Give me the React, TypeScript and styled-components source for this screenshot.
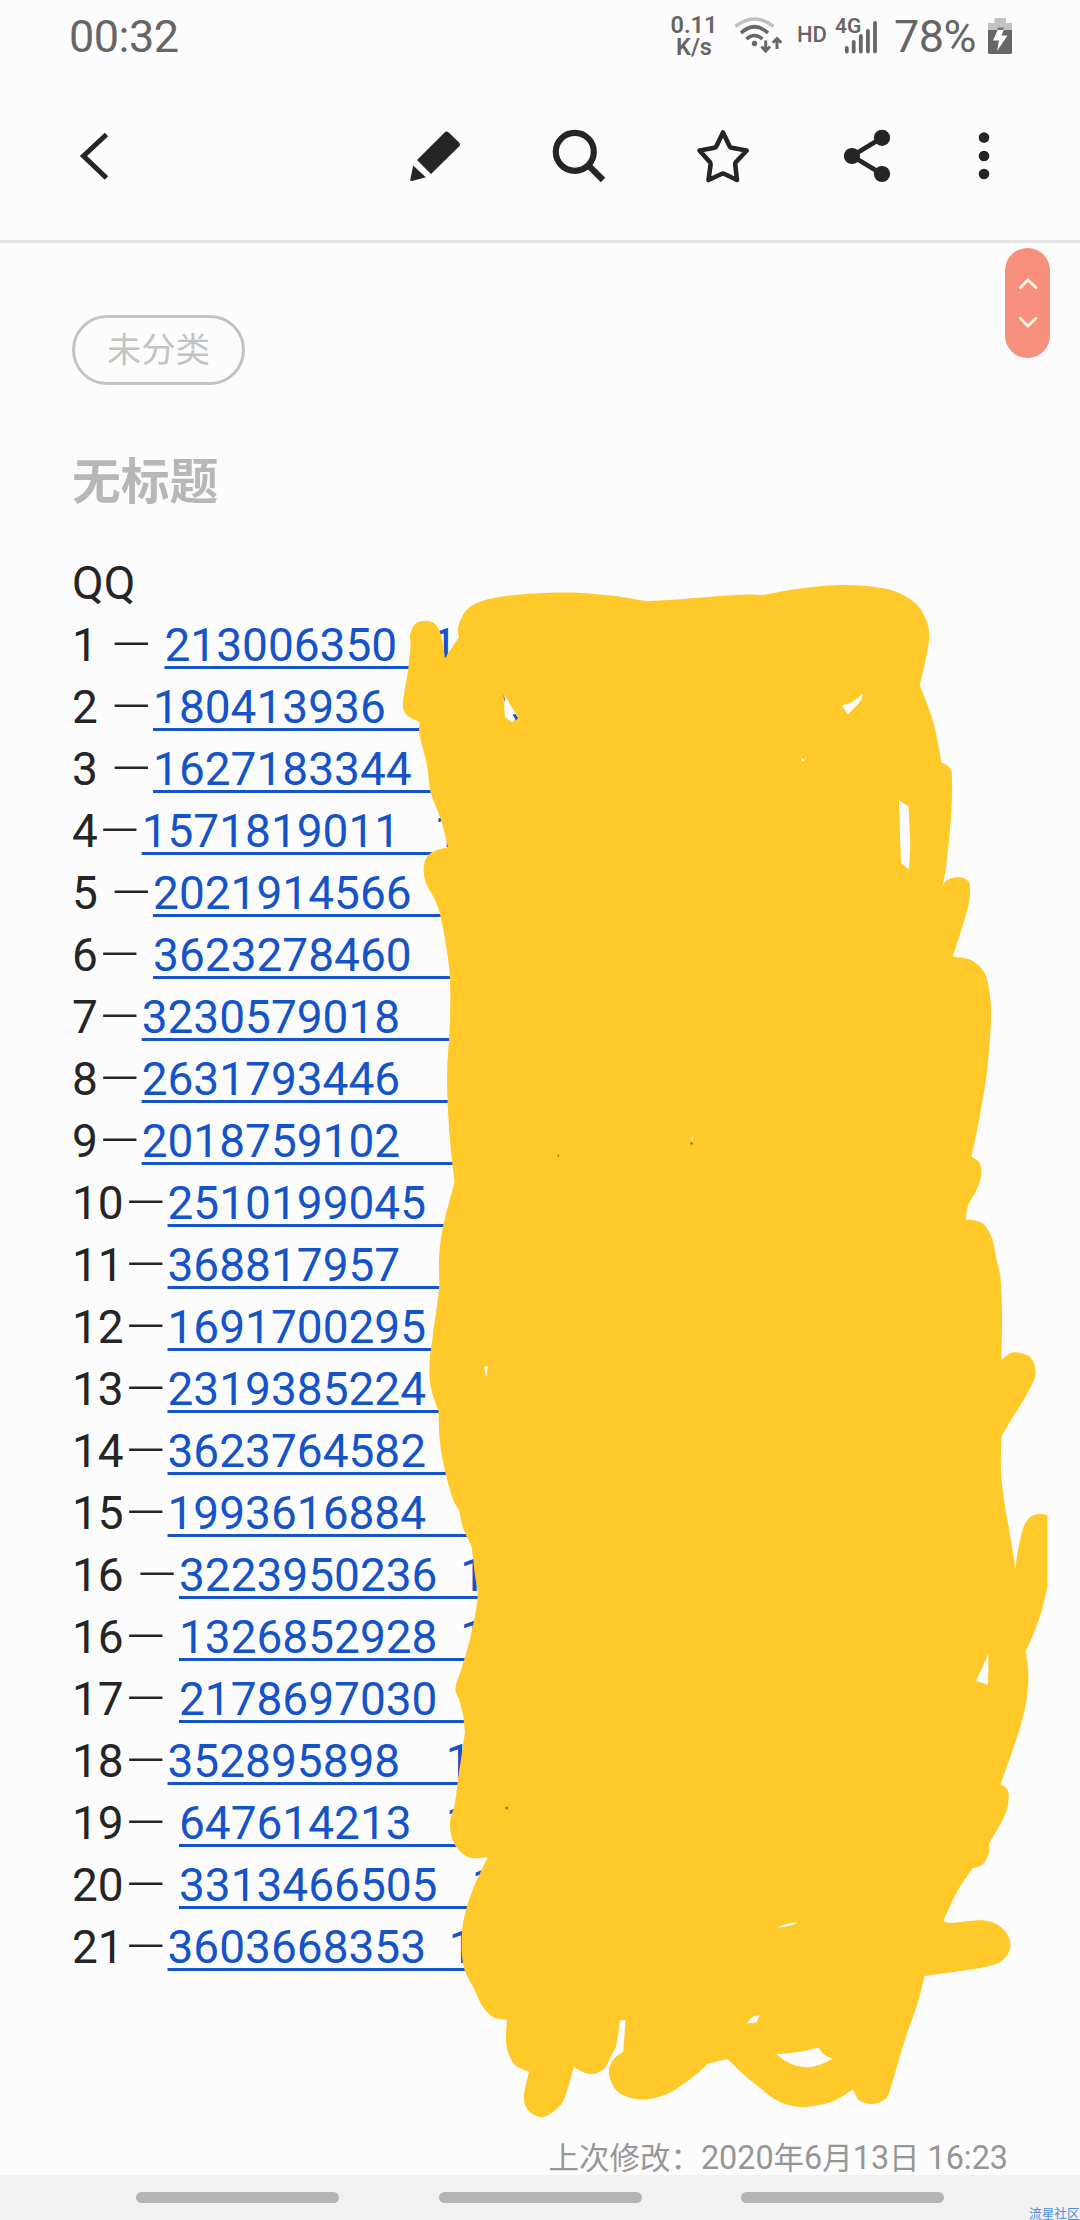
import React from "react";
import styled, { createGlobalStyle } from "styled-components";

const GlobalStyle = createGlobalStyle`
  body { margin: 0; background: #fcfcfc; }
  * { box-sizing: border-box; }
`;

const Screen = styled.div`
  position: relative;
  display: flex;
  flex-direction: column;
  width: 1080px;
  height: 2220px;
  overflow: hidden;
  background: #fcfcfc;
  color: #252525;
  font-family: Roboto, "Noto Sans CJK SC", sans-serif;
`;

const StatusBar = styled.header`
  display: flex;
  height: 72px;
  padding: 0 68px;
  align-items: center;
  color: #666;
`;

const StatusText = styled.span`
  padding-top: 2px;
  font-size: 45px;
  line-height: 70px;
  letter-spacing: -0.5px;
`;

const Clock = styled(StatusText)`
  flex: 1;
  padding-left: 1px;
`;

const Percent = styled(StatusText)`
  margin-left: 15px;
`;

const NetSpeed = styled.div`
  display: flex;
  flex-direction: column;
  width: 50px;
  align-items: center;
  font-size: 23.5px;
  line-height: 22px;
  font-weight: 600;
`;

const HdLabel = styled.span`
  margin-left: 13px;
  padding-bottom: 3px;
  font-size: 22px;
  font-weight: 500;
`;

const Signal = styled.div`
  position: relative;
  width: 44px;
  height: 72px;
  margin-left: 8px;
`;

const Generation = styled.span`
  position: absolute;
  left: 0;
  top: 13px;
  font-size: 21px;
  line-height: 26px;
  font-weight: 600;
`;

const Toolbar = styled.nav`
  display: flex;
  align-items: center;
  justify-content: space-between;
  height: 171px;
  padding: 0 66px 0 64px;
  border-bottom: 3px solid #e6e6e6;
`;

const Actions = styled.div`
  display: flex;
  gap: 84px;
`;

const MoreSlot = styled.div`
  display: flex;
  margin-left: -27px;
`;

const Note = styled.main`
  display: flex;
  flex: 1;
  flex-direction: column;
  align-items: flex-start;
  padding: 72px 72px 0 72px;
`;

const Category = styled.div`
  width: 173px;
  height: 70px;
  border: 3px solid #c3c3c3;
  border-radius: 35px;
  color: #c3c3c3;
  font-size: 34.3px;
  font-weight: 400;
  line-height: 65px;
  text-align: center;
`;

const Title = styled.h1`
  margin: 63px 0 0;
  color: #b7b7b7;
  font-size: 48.8px;
  font-weight: 700;
  line-height: 70px;
`;

const Lines = styled.div`
  margin-top: 34px;
  font-size: 46px;
  line-height: 62px;
`;

const Line = styled.div`
  display: flex;
  height: 62px;
  white-space: pre;
`;

const Dash = styled.span`
  width: 43.8px;
  display: flex;
  justify-content: center;
  font-size: 51px;
  font-weight: 300;
  line-height: 61px;
`;

const NumberLink = styled.a`
  color: #1553c9;
  text-decoration: underline;
  text-decoration-thickness: 2.5px;
  text-underline-offset: 5px;
  text-decoration-skip-ink: none;
`;

const Modified = styled.div`
  align-self: flex-end;
  margin-top: auto;
  color: #969696;
  font-size: 32.3px;
  line-height: 32px;
  white-space: nowrap;
`;

const Han = styled.span`
  font-size: 30.5px;
`;

const NavBar = styled.footer`
  display: flex;
  height: 45px;
  padding: 17px 136px 0;
  justify-content: space-between;
  background: #f1f1f1;
`;

const NavHandle = styled.div`
  width: 203px;
  height: 11px;
  border-radius: 6px;
  background: #b5b5b5;
`;

const ScrollPill = styled.div`
  position: absolute;
  left: 1005px;
  top: 248px;
  width: 45px;
  height: 110px;
  border-radius: 23px;
  background: #f68f7b;
`;

const Scribble = styled.svg`
  position: absolute;
  left: 0;
  top: 0;
  pointer-events: none;
`;

const Watermark = styled.span`
  position: absolute;
  left: 1029px;
  top: 2207px;
  color: #4a90e2;
  font-size: 12.7px;
  line-height: 13px;
  white-space: nowrap;
`;

type Entry = [before: string, after: string, link: string];

const entries: Entry[] = [
  ["1 ", " ", "213006350   1"],
  ["2 ", "", "180413936       "],
  ["3 ", "", "1627183344     "],
  ["4", "", "1571819011   1"],
  ["5 ", "", "2021914566     "],
  ["6", " ", "3623278460     "],
  ["7", "", "3230579018      "],
  ["8", "", "2631793446      "],
  ["9", "", "2018759102    1"],
  ["10", "", "2510199045    "],
  ["11", "", "368817957      "],
  ["12", "", "1691700295    "],
  ["13", "", "2319385224    "],
  ["14", "", "3623764582    "],
  ["15", "", "1993616884     "],
  ["16 ", "", "3223950236  1"],
  ["16", " ", "1326852928  1"],
  ["17", " ", "2178697030    "],
  ["18", "", "352895898    1"],
  ["19", " ", "647614213   1"],
  ["20", " ", "3313466505   1"],
  ["21", "", "3603668353  1"],
];

type Pt = [number, number];

/* Each run is a smooth stretch of the marker outline; a new run starts at a corner. */
const outline: Pt[][] = [
  [[459, 637], [458.4, 626], [470, 607], [502, 596.5], [563, 592.5], [610, 595.5], [645, 601]],
  [[670, 600], [739, 594.8], [763, 595]],
  [[800, 588.5], [841, 585], [875, 587], [898, 592.5], [919, 607], [929, 631], [926, 658], [919.6, 685]],
  [[933, 721], [941.6, 762.5]],
  [[949, 767], [952, 777], [951, 817], [946, 867], [941, 894]],
  [[945, 882], [957, 877], [968, 881], [970, 892], [967, 911], [953, 956.4]],
  [[971, 960], [984, 972], [989.5, 992], [991, 1021], [987, 1071], [979.6, 1117], [971.5, 1157]],
  [[979, 1162], [981.5, 1174], [977, 1189], [968, 1206], [966, 1219.6]],
  [[982, 1223], [992, 1238], [996, 1257], [1000.6, 1279], [1002, 1314], [1001.5, 1360]],
  [[1009, 1354], [1018, 1352.5], [1031, 1358], [1035.5, 1373], [1028, 1392], [1001.5, 1436]],
  [[1001, 1471], [1004, 1500], [1009, 1529], [1015.5, 1568]],
  [[1018, 1550], [1024, 1526], [1032, 1516], [1042, 1514], [1047.5, 1515.5]],
  [[1047.5, 1586]],
  [[1041, 1613], [1033, 1635], [1025.8, 1651]],
  [[1028.4, 1681], [1022, 1721], [1000.6, 1784]],
  [[1008, 1791], [1008, 1805], [1003, 1819], [989, 1843.5]],
  [[989, 1853], [983, 1864], [972.4, 1868.6]],
  [[957, 1892], [943.8, 1920]],
  [[950, 1923], [985, 1920.5], [1003, 1929], [1010.5, 1944], [1004, 1959], [985, 1967], [924.7, 1976]],
  [[917, 2005], [905, 2039.6], [890, 2090], [884, 2100], [871.8, 2104], [859, 2100], [853, 2089.5]],
  [[831, 2102], [801, 2107], [778, 2101], [760, 2088], [743, 2074], [727.4, 2059]],
  [[708, 2063.6]],
  [[693, 2077], [667, 2094], [640.7, 2099.5], [618, 2092], [609, 2074], [613, 2060], [623.3, 2051.4]],
  [[625.5, 2020.3]],
  [[620, 2020.3]],
  [[618, 2036], [616, 2047]],
  [[611, 2056], [604, 2069], [589.5, 2074], [573.5, 2067]],
  [[568, 2088], [560.5, 2105], [543, 2117], [528, 2110], [524, 2096], [529, 2071.7]],
  [[515, 2065], [508, 2052], [506, 2039], [507, 2020]],
  [[493, 2017], [482.4, 2006], [473.7, 1988]],
  [[464, 1968], [461.6, 1943], [464, 1918], [473, 1889], [487.6, 1857.5]],
  [[468, 1857], [454, 1843], [450, 1823], [455, 1803], [458, 1780], [465, 1732.5]],
  [[463, 1715], [459, 1699]],
  [[455.5, 1688], [462, 1667], [471, 1635], [477.5, 1598], [475, 1575], [471.5, 1546]],
  [[463, 1528], [459.4, 1510.7]],
  [[453, 1499], [445.5, 1473], [440, 1443], [438.5, 1411]],
  [[431, 1388], [429.5, 1364], [433, 1334], [439, 1289], [439, 1260], [443, 1227], [454.6, 1182]],
  [[450, 1140], [447, 1078], [450, 1020], [449, 967], [438.8, 910], [426, 883], [424, 865], [430.6, 853], [448, 847]],
  [[441, 820], [430.6, 792], [427, 765], [419.6, 735], [419.6, 722]],
  [[407, 715], [403, 703], [408, 671], [410.5, 645], [410, 635], [415, 624], [425.7, 620.7], [435, 624], [441, 635], [445, 658]],
  [[447, 656]],
  [[447, 655], [459, 637]],
];

/* Catmull-Rom interpolation written out as cubic Bezier segments. */
function tracePath(runs: Pt[][]): string {
  let last: Pt = runs[0][0];
  let d = `M${last[0]} ${last[1]}`;
  runs.forEach((run, index) => {
    const points = index === 0 ? run : [last, ...run];
    for (let i = 0; i < points.length - 1; i += 1) {
      const p0 = points[Math.max(0, i - 1)];
      const p1 = points[i];
      const p2 = points[i + 1];
      const p3 = points[Math.min(points.length - 1, i + 2)];
      d += `C${p1[0] + (p2[0] - p0[0]) / 6} ${p1[1] + (p2[1] - p0[1]) / 6} ${p2[0] - (p3[0] - p1[0]) / 6} ${p2[1] - (p3[1] - p1[1]) / 6} ${p2[0]} ${p2[1]}`;
    }
    last = points[points.length - 1];
  });
  return `${d}Z`;
}

const markerPath = tracePath(outline);

const WifiSvg = styled.svg`
  margin-left: 15px;
`;

const BatterySvg = styled.svg`
  margin-left: 12px;
`;

const WifiIcon = () => (
  <WifiSvg width="50" height="40" viewBox="734 16 50 40" fill="none" stroke="#666" strokeWidth="3.6">
    <path d="M735.5 26.5Q754.5 11.500 773.500 26.500" stroke="#c0c0c0" />
    <path d="M741 33Q754.500 20.500 768 33" />
    <path d="M746.500 39Q754.500 32 762.500 39" />
    <circle cx="754.500" cy="43.500" r="2.700" fill="#666" stroke="none" />
    <path d="M765.700 40.500V51M761.500 46.500L765.700 51L770 46.500M777 49V38.500M772.800 42.700L777 38.500L781.300 42.700" strokeWidth="3" />
  </WifiSvg>
);

const SignalBars = () => (
  <svg width="44" height="72" viewBox="834 0 44 72" stroke="#666" strokeWidth="3.800" strokeLinecap="round">
    <path d="M845.800 48V51.500M852.700 42V51.500M859.800 36V51.500M866.900 31V51.500M874 23V51.500" />
  </svg>
);

const BatteryIcon = () => (
  <BatterySvg width="24" height="38" viewBox="988 16 24 38">
    <path d="M994.500 17H1006V22H1012V30H988V22H994.500Z" fill="#c2c2c2" />
    <path d="M988 29H1012V51.500Q1012 53 1010.500 53H989.500Q988 53 988 51.500Z" fill="#666" />
    <path d="M998 28H1004L1001.500 34.500H1007.500L997 50L999 39.500H993Z" fill="#fcfcfc" />
    <path d="M998 26.500H1004L1003.200 29H997.200Z" fill="#777" />
  </BatterySvg>
);

const iconProps = { width: 60, height: 60, fill: "none", stroke: "#252525" };

export default function App() {
  return (
    <>
      <GlobalStyle />
      <Screen>
        <StatusBar>
          <Clock>00:32</Clock>
          <NetSpeed>
            <span>0.11</span>
            <span>K/s</span>
          </NetSpeed>
          <WifiIcon />
          <HdLabel>HD</HdLabel>
          <Signal>
            <SignalBars />
            <Generation>4G</Generation>
          </Signal>
          <Percent>78%</Percent>
          <BatteryIcon />
        </StatusBar>

        <Toolbar>
          <svg {...iconProps} viewBox="64 126 60 60" strokeWidth="5">
            <path d="M106.500 134.500L83.500 156L106.500 178" />
          </svg>
          <Actions>
            <svg {...iconProps} viewBox="405 126 60 60" fill="#252525" stroke="none">
              <path d="M444.800 132.300Q446.600 130.500 448.500 132.300L459.300 142.700Q461 144.500 459.300 146.300L431 174L417 160Z" />
              <path d="M413.200 165.500L425.800 177.300L412 181Q410 181.500 410.300 179.500Z" />
            </svg>
            <svg {...iconProps} viewBox="549 126 60 60" strokeWidth="6.200">
              <circle cx="574.800" cy="151.800" r="19" />
              <path d="M588 165L603 180" />
            </svg>
            <svg {...iconProps} viewBox="693 126 60 60" strokeWidth="4.600" strokeLinejoin="round">
              <path d="M723 132.500L729.500 146Q730 147.500 731.500 147.700L746.700 150.500L736 162Q735 163 735.200 164.500L737 180L724.500 174Q723 173.300 721.500 174L708.500 180L710.600 164.500Q710.800 163 709.800 162L699.500 150.500L714.500 147.700Q716 147.500 716.500 146Z" />
            </svg>
            <svg {...iconProps} viewBox="837 126 60 60" strokeWidth="4.800">
              <path d="M882 137.800L852 156L882 174" />
              <g fill="#252525" stroke="none">
                <circle cx="882" cy="137.800" r="8.100" />
                <circle cx="852" cy="156" r="8.100" />
                <circle cx="882" cy="174" r="8.100" />
              </g>
            </svg>
            <MoreSlot>
              <svg {...iconProps} viewBox="954 126 60 60" fill="#252525" stroke="none">
                <circle cx="984" cy="137.500" r="5.300" />
                <circle cx="984" cy="156" r="5.300" />
                <circle cx="984" cy="174" r="5.300" />
              </svg>
            </MoreSlot>
          </Actions>
        </Toolbar>

        <Note>
          <Category>未分类</Category>
          <Title>无标题</Title>
          <Lines>
            <Line>QQ</Line>
            {entries.map(([before, after, link], index) => (
              <Line key={index}>
                {before}
                <Dash>—</Dash>
                {after && <span>{after}</span>}
                <NumberLink>{link}</NumberLink>
              </Line>
            ))}
          </Lines>
          <Modified>
            <Han>上次修改：</Han>2020<Han>年</Han>6<Han>月</Han>13<Han>日</Han> 16:23
          </Modified>
        </Note>

        <NavBar>
          <NavHandle />
          <NavHandle />
          <NavHandle />
        </NavBar>

        <ScrollPill>
          <svg width="45" height="110" viewBox="1005 248 45 110" fill="none" stroke="#fff3e6" strokeWidth="2.800">
            <path d="M1019.500 288.500L1028 280L1036.800 288.500M1019.500 317.500L1028 326L1036.800 317.500" />
          </svg>
        </ScrollPill>

        <Scribble width="1080" height="2220" viewBox="0 0 1080 2220">
          <path d={markerPath} fill="#ffc929" />
          <g fill="#fcfcfc">
            <path d="M503.500 694L518 717L512 722.500L505 717Z" />
            <path d="M841.600 705.700Q852 704 862.400 694Q863 698 859 703L847.800 714.600Z" />
            <path d="M899 800L908.600 806.400L910.300 845.700L909 869.600L901 863L899.800 831Z" />
            <path d="M801 757.500L804.500 760L802.500 762Z" />
            <path d="M988.500 1654L988 1685L976 1680.700Z" />
            <path d="M777 1927.500Q788 1922.500 797 1922.500Q796 1925.500 777 1927.500Z" />
            <path d="M759.500 2015.500L756.500 2022.500L747 2023.600Q751 2015 759.500 2015.500Z" />
            <path d="M776.400 2054Q800 2053 818.500 2047.500Q822 2055 832.400 2058.800Q802 2078 776.400 2054Z" />
            <path d="M484 1367L488 1366L486.300 1377.500Z" />
          </g>
          <path d="M512.500 714.500L515.500 714L518 718L516 720.500Z" fill="#1553c9" />
          <path d="M503 694L505 698L504.500 703Z" fill="#6c7a58" />
          <path d="M692.500 1134L693 1140L691 1140Z" fill="#fff0b0" />
          <g fill="#8a7a22">
            <circle cx="691.500" cy="1143.500" r="1.200" />
            <circle cx="506.800" cy="1808" r="1.500" />
            <circle cx="558.300" cy="1155.700" r="1" />
          </g>
        </Scribble>
        <Watermark>流星社区</Watermark>
      </Screen>
    </>
  );
}
